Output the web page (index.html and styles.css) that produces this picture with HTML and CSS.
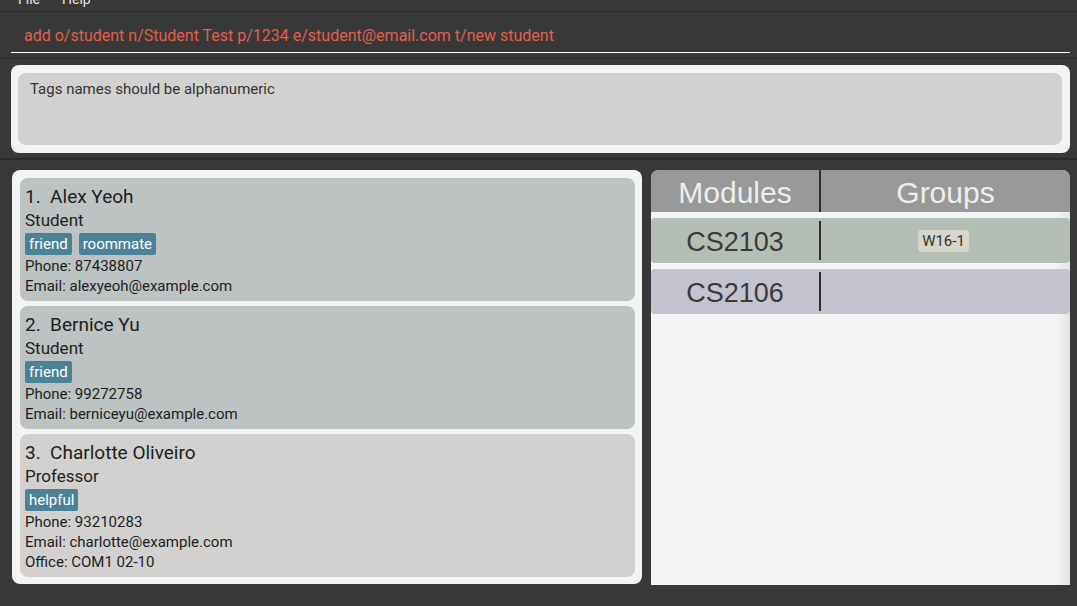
FILE: index.html
```html
<!DOCTYPE html>
<html>
<head>
<meta charset="utf-8">
<link rel="stylesheet" href="styles.css">
</head>
<body>
<div class="app">
  <div class="menubar"><span class="menu">File</span><span class="menu">Help</span></div>
  <div class="command">
    <div class="cmd-text">add o/student n/Student Test p/1234 e/student@email.com t/new student</div>
  </div>
  <div class="result">
    <div class="result-outer">
      <div class="result-inner"><span class="result-text">Tags names should be alphanumeric</span></div>
    </div>
  </div>
  <div class="main">
    <div class="list-panel">
      <div class="card card-a">
        <div class="name">1.&nbsp; Alex Yeoh</div>
        <div class="role">Student</div>
        <div class="tags"><span class="tag">friend</span><span class="tag">roommate</span></div>
        <div class="line">Phone: 87438807</div>
        <div class="line">Email: alexyeoh@example.com</div>
      </div>
      <div class="card card-a">
        <div class="name">2.&nbsp; Bernice Yu</div>
        <div class="role">Student</div>
        <div class="tags"><span class="tag">friend</span></div>
        <div class="line">Phone: 99272758</div>
        <div class="line">Email: berniceyu@example.com</div>
      </div>
      <div class="card card-b">
        <div class="name">3.&nbsp; Charlotte Oliveiro</div>
        <div class="role">Professor</div>
        <div class="tags"><span class="tag">helpful</span></div>
        <div class="line">Phone: 93210283</div>
        <div class="line">Email: charlotte@example.com</div>
        <div class="line">Office: COM1 02-10</div>
      </div>
    </div>
    <div class="module-panel">
      <div class="mod-header">
        <div class="col-mod">Modules</div>
        <div class="col-grp">Groups</div>
      </div>
      <div class="mod-row row-green">
        <div class="col-mod cell">CS2103</div>
        <div class="col-grp cell"><span class="group-tag">W16-1</span></div>
      </div>
      <div class="mod-row row-purple">
        <div class="col-mod cell">CS2106</div>
        <div class="col-grp cell"></div>
      </div>
    </div>
  </div>
</div>
</body>
</html>
```

FILE: styles.css
```css
* { box-sizing: border-box; }
html, body {
  margin: 0;
  padding: 0;
  background: #383838;
  font-family: Roboto, "Noto Sans", sans-serif;
}
.app {
  width: 1077px;
  height: 606px;
  overflow: hidden;
  display: flex;
  flex-direction: column;
}
.menubar {
  height: 12px;
  overflow: hidden;
  border-bottom: 1px solid #2d2d2d;
  padding-left: 18px;
  display: flex;
  gap: 22px;
  color: #e6e6e6;
  font-size: 14px;
  line-height: 14px;
}
.menu { margin-top: -8px; }
.command {
  height: 47px;
  padding: 12px 7px 0 11px;
  border-bottom: 1px solid #2b2b2b;
}
.cmd-text {
  height: 29px;
  border-bottom: 1px solid #ffffff;
  color: #e0604a;
  font-size: 16px;
  line-height: 22px;
  padding: 1px 0 0 13px;
}
.result {
  height: 101px;
  padding: 6px 7px 0 11px;
  border-bottom: 2px solid #2b2b2b;
}
.result-outer {
  height: 88px;
  background: #f3f3f3;
  border-radius: 8px;
  padding: 8px 8px 8px 7px;
}
.result-inner {
  height: 72px;
  background: #d2d1cf;
  border-radius: 8px;
  padding: 6px 12px;
}
.result-text {
  color: #333333;
  font-size: 15px;
  line-height: 18px;
}
.main {
  flex: 1;
  display: flex;
  gap: 9px;
  padding: 10px 7px 0 12px;
}
.list-panel {
  width: 630px;
  height: 414px;
  background: #f4f4f4;
  border-radius: 8px;
  padding: 8px 7px 7px 8px;
  display: flex;
  flex-direction: column;
  gap: 5px;
}
.card {
  border-radius: 8px;
  padding: 6px 5px 5px 5px;
  color: #1e1e1e;
}
.card-a { background: #bdc2c2; }
.card-b { background: #d2d1cf; }
.name {
  font-size: 19px;
  line-height: 24px;
  padding-top: 1px;
}
.role {
  font-size: 17px;
  line-height: 23px;
}
.tags {
  display: flex;
  gap: 7px;
  margin-top: 1px;
  height: 22px;
}
.tag {
  background: #4b8298;
  color: #ffffff;
  font-size: 15px;
  line-height: 22px;
  padding: 0 4px;
  border-radius: 2px;
}
.line {
  font-size: 15px;
  line-height: 20px;
}
.tags + .line { margin-top: 1px; }
.module-panel {
  width: 419px;
  height: 415px;
  background: linear-gradient(to left, #e4e4e4 0px, #f4f4f4 14px, #f4f4f4 100%);
  border-radius: 8px 8px 0 0;
  display: flex;
  flex-direction: column;
  gap: 6px;
}
.mod-header {
  height: 42px;
  background: #999999;
  border-radius: 8px 8px 0 0;
  display: flex;
  color: #eeeeee;
  font-family: "Liberation Sans", Arial, sans-serif;
  font-size: 30px;
}
.mod-header .col-mod,
.mod-header .col-grp { padding-top: 3px; }
.col-mod {
  width: 170px;
  border-right: 2px solid #2e2e2e;
  display: flex;
  align-items: center;
  justify-content: center;
}
.col-grp {
  flex: 1;
  display: flex;
  align-items: center;
  justify-content: center;
}
.mod-row {
  height: 45px;
  border-radius: 4px;
  display: flex;
  align-items: center;
}
.row-green { background: #b4beb5; }
.row-purple { background: #c4c3d0; }
.mod-row .col-mod {
  height: 39px;
  padding-top: 3px;
  font-family: "Liberation Sans", Arial, sans-serif;
  font-size: 27px;
  color: #3a3a3a;
}
.mod-row .col-grp { height: 39px; }
.group-tag {
  background: #d6d6cb;
  color: #333333;
  font-size: 15px;
  line-height: 22px;
  padding: 0 4px;
  border-radius: 4px;
  margin-left: -4px;
}
```
